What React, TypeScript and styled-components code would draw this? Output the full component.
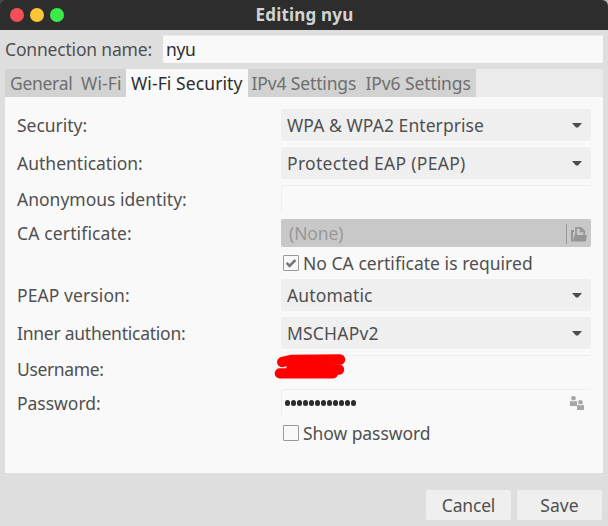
import React from 'react';
import styled, { createGlobalStyle } from 'styled-components';

const Global = createGlobalStyle`
  *, *::before, *::after { box-sizing: border-box; }
  body { margin: 0; background: #dedede; overflow: hidden; }
`;

const Window = styled.div`
  width: 608px;
  height: 526px;
  display: flex;
  flex-direction: column;
  background: #dedede;
  color: #505050;
  font: 17.5px/24px "Noto Sans", sans-serif;
`;

const TitleStrip = styled.div`
  height: 30px;
  background: linear-gradient(90deg, #4a4a4a 50%, #b5b5b5 50%);
`;

const TitleBar = styled.header`
  height: 30px;
  display: grid;
  grid-template-columns: 1fr auto 1fr;
  align-items: center;
  padding: 0 8px 0 9px;
  background: #2d2d2d;
  border-radius: 6px 6px 0 0;
`;

const Lights = styled.div`
  display: flex;
  gap: 6px;
  padding-left: 1px;
`;

const Light = styled.span<{ $color: string }>`
  width: 14px;
  height: 14px;
  border-radius: 50%;
  background: ${(p) => p.$color};
`;

const Text = styled.span<{ $track?: number }>`
  white-space: nowrap;
  letter-spacing: ${(p) => p.$track ?? 0}px;
`;

const Title = styled.h1`
  margin: 0;
  color: #d3d3d3;
  font-size: 17px;
  line-height: 24px;
  font-weight: 700;
  letter-spacing: 0.2px;
`;

const NameRow = styled.div`
  display: grid;
  grid-template-columns: 153px 1fr;
  gap: 5px;
  align-items: center;
  padding: 5px 5px 6px;
`;

const NameEntry = styled.div`
  height: 28px;
  display: flex;
  align-items: center;
  padding: 0 3px;
  border-radius: 2px;
  background: #f9f9f9;
  box-shadow: inset 0 1px #ececec;
  color: #2d2d2d;
`;

const TabBar = styled.nav`
  height: 28px;
  display: flex;
  margin: 0 5px;
  background: #ebebeb;
`;

const Tab = styled.div<{ $width: number; $pad?: number; $active?: boolean }>`
  width: ${(p) => p.$width}px;
  display: flex;
  align-items: center;
  padding-left: ${(p) => p.$pad ?? 5}px;
  background: ${(p) => (p.$active ? '#f9f9f9' : '#d2d2d2')};
  color: ${(p) => (p.$active ? '#2d2d2d' : '#6f6f6f')};
`;

const Panel = styled.main`
  height: 376px;
  margin: 0 5px;
  padding: 12px;
  display: flex;
  flex-direction: column;
  gap: 6px;
  background: #f9f9f9;
`;

const Row = styled.div`
  display: grid;
  grid-template-columns: 264px 310px;
  align-items: center;
`;

const Select = styled.div`
  height: 32px;
  display: flex;
  align-items: center;
  justify-content: space-between;
  padding: 0 9px 0 6px;
  border-radius: 2px;
  background: #efefef;
`;

const Entry = styled.div`
  position: relative;
  height: 28px;
  display: flex;
  align-items: center;
  justify-content: space-between;
  padding: 0 7px 0 4px;
  border-radius: 2px;
  box-shadow: inset 1px 1px #ededed;
  color: #2d2d2d;
`;

const FileEntry = styled.div`
  height: 28px;
  display: flex;
  align-items: center;
  padding: 1px 4px 0 8px;
  border-radius: 2px;
  background: #c8c8c8;
  color: #999;
`;

const FileName = styled(Text)`
  padding-bottom: 1px;
`;

const Divider = styled.span`
  width: 1px;
  height: 20px;
  margin: 0 4px 0 auto;
  background: #999;
`;

const CheckRow = styled.div`
  height: 20px;
  display: flex;
  align-items: center;
  gap: 4px;
  padding-left: 2px;
`;

const CheckBox = styled.span`
  width: 16px;
  height: 16px;
  display: grid;
  place-items: center;
  border: 1px solid #999;
  border-radius: 1px;
`;

const Dots = styled.div`
  display: flex;
  gap: 0.8px;
`;

const Dot = styled.span`
  width: 5.2px;
  height: 5.2px;
  border-radius: 50%;
  background: #2d2d2d;
`;

const Scribble = styled.svg`
  position: absolute;
  left: -8px;
  top: -3px;
`;

const Footer = styled.footer`
  display: flex;
  justify-content: flex-end;
  gap: 6px;
  padding: 17px 6px 0;
`;

const Button = styled.button`
  width: 85px;
  height: 30px;
  padding: 0;
  border: 0;
  border-radius: 2px;
  background: #efefef;
  color: inherit;
  font: inherit;
`;

const Arrow = () => (
  <svg width="10" height="6" viewBox="0 0 10 6">
    <path d="M0 1h10L6 5.5H4z" fill="#4c4c4c" />
  </svg>
);

const OpenFileIcon = () => (
  <svg width="16" height="16" viewBox="0 0 16 16">
    <path d="M1 15V5h2" fill="none" stroke="#969696" strokeWidth="2" />
    <path d="M5 9V1.8h5L13.2 5v4M9.6 1.8v3.6h3.6" fill="none" stroke="#969696" strokeWidth="1.7" />
    <path d="M3.5 9H16l-1.2 6.5H0V14h2.2z" fill="#969696" />
  </svg>
);

const UsersIcon = () => (
  <svg width="14" height="14" viewBox="0 0 14 14" fill="#a6a6a6">
    <circle cx="3.5" cy="2.2" r="2.3" />
    <path d="M0 10V6q0-1.2 1.2-1.2.9.6 2.3.6t2.3-.6Q7 4.8 7 6v4z" />
    <circle cx="10.5" cy="6.2" r="2.3" />
    <path d="M7 14v-4q0-1.2 1.2-1.2.9.6 2.3.6t2.3-.6q1.2 0 1.2 1.2v4z" />
  </svg>
);

type SelectRowProps = { label: string; track: number; value: string; valueTrack: number };

const SelectRow = ({ label, track, value, valueTrack }: SelectRowProps) => (
  <Row>
    <Text $track={track}>{label}</Text>
    <Select>
      <Text $track={valueTrack}>{value}</Text>
      <Arrow />
    </Select>
  </Row>
);

const tabs = [
  { label: 'General', width: 71, track: -0.3 },
  { label: 'Wi-Fi', width: 50, track: 0.12 },
  { label: 'Wi-Fi Security', width: 122, track: 0.09, active: true },
  { label: 'IPv4 Settings', width: 114, track: -0.14, pad: 3.5 },
  { label: 'IPv6 Settings', width: 114, track: -0.1, pad: 3.5 },
];

export default function App() {
  return (
    <Window>
      <Global />
      <TitleStrip>
        <TitleBar>
          <Lights>
            <Light $color="#f25056" />
            <Light $color="#fac536" />
            <Light $color="#39ea49" />
          </Lights>
          <Title>Editing nyu</Title>
        </TitleBar>
      </TitleStrip>
      <NameRow>
        <Text $track={-0.18}>Connection name:</Text>
        <NameEntry>
          <Text $track={-0.4}>nyu</Text>
        </NameEntry>
      </NameRow>
      <TabBar>
        {tabs.map((t) => (
          <Tab key={t.label} $width={t.width} $pad={t.pad} $active={t.active}>
            <Text $track={t.track}>{t.label}</Text>
          </Tab>
        ))}
      </TabBar>
      <Panel>
        <SelectRow label="Security:" track={-0.02} value="WPA & WPA2 Enterprise" valueTrack={0.07} />
        <SelectRow label="Authentication:" track={0} value="Protected EAP (PEAP)" valueTrack={0.29} />
        <Row>
          <Text>Anonymous identity:</Text>
          <Entry />
        </Row>
        <Row>
          <Text $track={0.14}>CA certificate:</Text>
          <FileEntry>
            <FileName $track={-0.1}>(None)</FileName>
            <Divider />
            <OpenFileIcon />
          </FileEntry>
        </Row>
        <Row>
          <span />
          <CheckRow>
            <CheckBox>
              <svg width="12" height="10" viewBox="0 0 12 10">
                <path d="M1.6 4.8l3 3L10.4 2" fill="none" stroke="#777" strokeWidth="2.6" />
              </svg>
            </CheckBox>
            <Text $track={0.03}>No CA certificate is required</Text>
          </CheckRow>
        </Row>
        <SelectRow label="PEAP version:" track={0.09} value="Automatic" valueTrack={0.14} />
        <SelectRow label="Inner authentication:" track={-0.25} value="MSCHAPv2" valueTrack={0.19} />
        <Row>
          <Text $track={-0.35}>Username:</Text>
          <Entry>
            <Scribble width="76" height="30" viewBox="0 0 76 30" fill="none" stroke="#f00" strokeLinecap="round">
              <path d="M9.3 10L18 8L67 7.6" strokeWidth="10.5" strokeLinejoin="round" />
              <path d="M18 17.5H66" strokeWidth="10.4" />
              <path d="M6.8 21.3H60" strokeWidth="10.2" />
              <path d="M16 12.4H60" stroke="#e00000" strokeWidth=".5" strokeDasharray="5 4" />
            </Scribble>
          </Entry>
        </Row>
        <Row>
          <Text $track={-0.02}>Password:</Text>
          <Entry>
            <Dots>
              {Array.from({ length: 12 }, (_, i) => (
                <Dot key={i} />
              ))}
            </Dots>
            <UsersIcon />
          </Entry>
        </Row>
        <Row>
          <span />
          <CheckRow>
            <CheckBox />
            <Text $track={-0.06}>Show password</Text>
          </CheckRow>
        </Row>
      </Panel>
      <Footer>
        <Button>
          <Text $track={-0.19}>Cancel</Text>
        </Button>
        <Button>
          <Text $track={0.06}>Save</Text>
        </Button>
      </Footer>
    </Window>
  );
}
